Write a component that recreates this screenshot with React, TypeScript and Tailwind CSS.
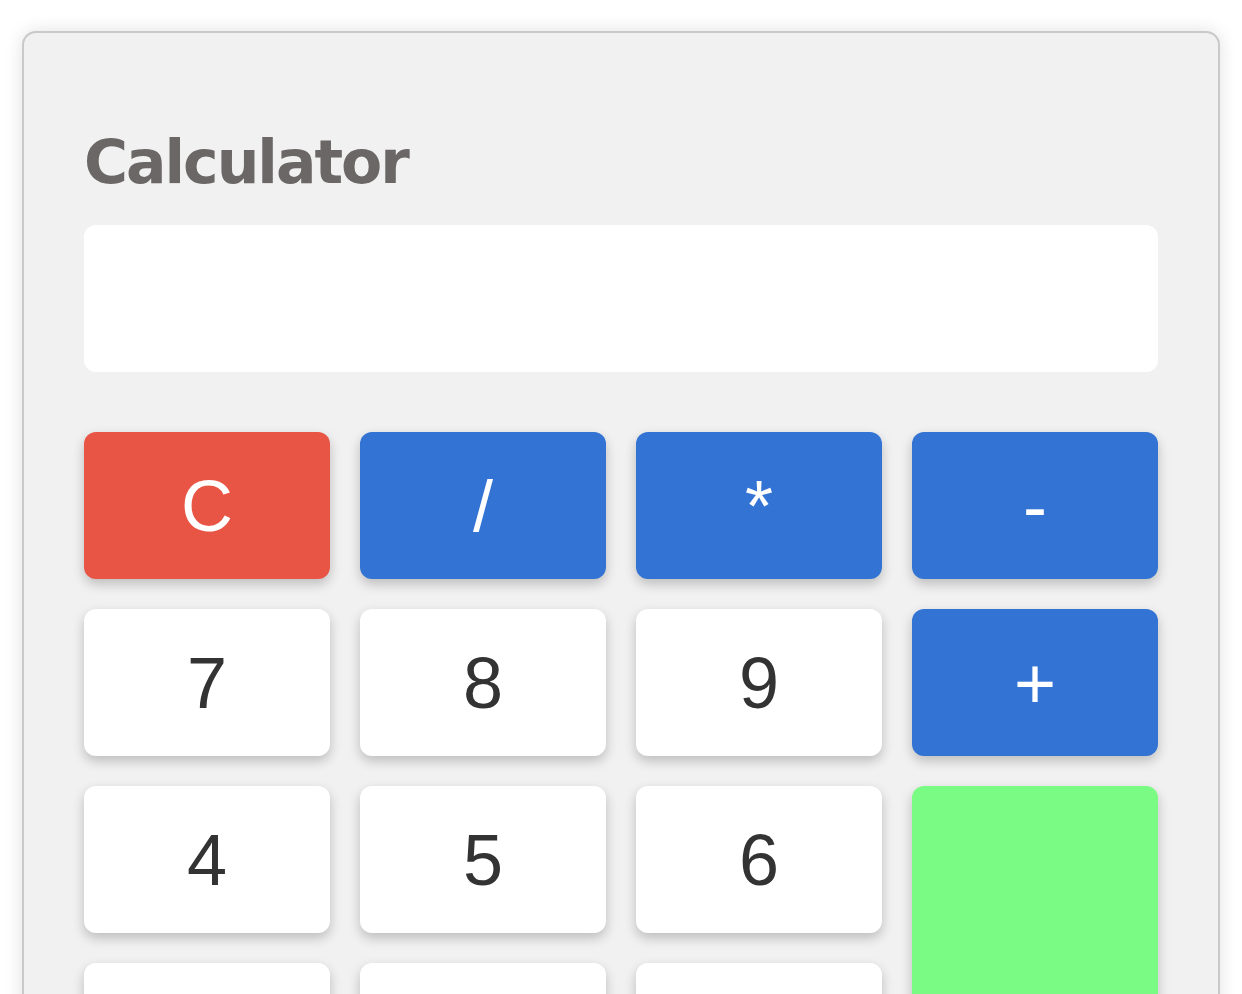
import React from "react";

type Btn = { label: string; kind: "red" | "blue" | "white" | "green"; span?: string };

const buttons: Btn[] = [
  { label: "C", kind: "red" },
  { label: "/", kind: "blue" },
  { label: "*", kind: "blue" },
  { label: "-", kind: "blue" },
  { label: "7", kind: "white" },
  { label: "8", kind: "white" },
  { label: "9", kind: "white" },
  { label: "+", kind: "blue" },
  { label: "4", kind: "white" },
  { label: "5", kind: "white" },
  { label: "6", kind: "white" },
  { label: "=", kind: "green", span: "row-span-3" },
  { label: "1", kind: "white" },
  { label: "2", kind: "white" },
  { label: "3", kind: "white" },
  { label: "0", kind: "white", span: "col-span-2" },
  { label: ".", kind: "white" },
];

const kindClass: Record<Btn["kind"], string> = {
  red: "bg-[#e95545] text-white",
  blue: "bg-[#3273d4] text-white",
  white: "bg-white text-[#333333]",
  green: "bg-[#7afc84] text-white",
};

export default function App() {
  return (
    <div className="min-h-screen bg-white px-[22px] pt-[31px] font-['Liberation_Sans',Arial,sans-serif]">
      <div className="rounded-[14px] border-2 border-[#c9c9c9] bg-[#f1f1f1] px-[60px] pt-[92px] pb-[60px] shadow-[0_0_18px_rgba(0,0,0,0.12)]">
        <h1 className="font-['DejaVu_Sans',sans-serif] text-[60px] font-bold leading-[75px] tracking-[-2px] text-[#6b6767]">
          Calculator
        </h1>
        <div className="mt-[25px] h-[147px] rounded-[12px] bg-white" />
        <div className="mt-[60px] grid grid-cols-4 auto-rows-[147px] gap-[30px]">
          {buttons.map((b, i) => (
            <button
              key={i}
              className={`${kindClass[b.kind]} ${b.span ?? ""} flex items-center justify-center rounded-[12px] text-[72px] leading-none shadow-[0_5px_12px_rgba(0,0,0,0.22)]`}
            >
              {b.kind === "green" ? "" : b.label}
            </button>
          ))}
        </div>
      </div>
    </div>
  );
}
